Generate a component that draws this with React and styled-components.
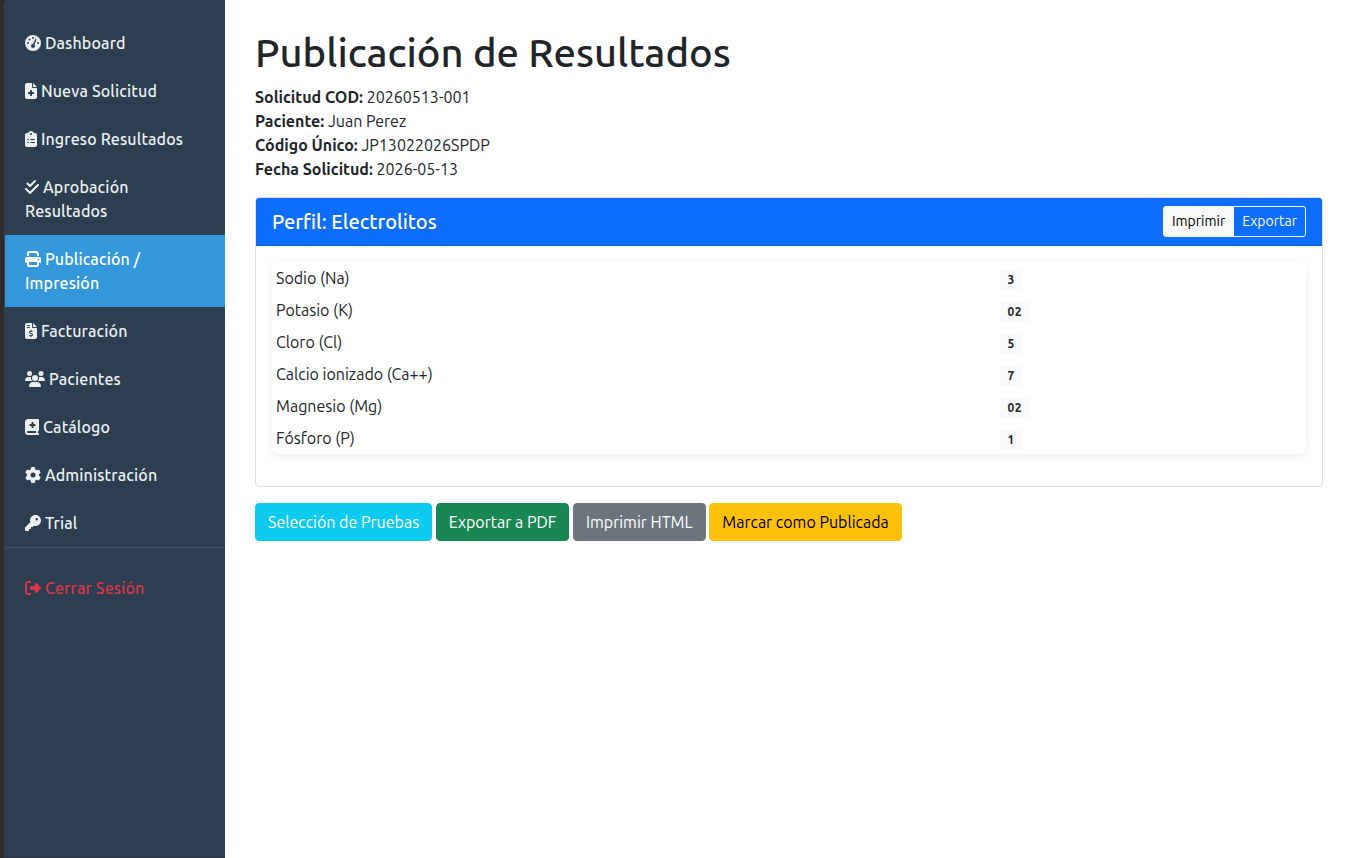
import React from "react";
import styled, { createGlobalStyle } from "styled-components";
import {
  FaGaugeHigh,
  FaFileMedical,
  FaClipboardList,
  FaCheckDouble,
  FaPrint,
  FaFileInvoiceDollar,
  FaUsers,
  FaBookMedical,
  FaGear,
  FaKey,
  FaRightFromBracket,
} from "react-icons/fa6";

const menu = [
  { icon: FaGaugeHigh, width: 16, label: "Dashboard" },
  { icon: FaFileMedical, width: 12, label: "Nueva Solicitud" },
  { icon: FaClipboardList, width: 12, label: "Ingreso Resultados" },
  { icon: FaCheckDouble, width: 14, label: "Aprobación Resultados" },
  { icon: FaPrint, width: 16, label: "Publicación / Impresión", active: true },
  { icon: FaFileInvoiceDollar, width: 12, label: "Facturación" },
  { icon: FaUsers, width: 20, label: "Pacientes" },
  { icon: FaBookMedical, width: 14, label: "Catálogo" },
  { icon: FaGear, width: 16, label: "Administración" },
  { icon: FaKey, width: 16, label: "Trial" },
];

const solicitud = [
  { label: "Solicitud COD:", value: "20260513-001" },
  { label: "Paciente:", value: "Juan Perez" },
  { label: "Código Único:", value: "JP13022026SPDP" },
  { label: "Fecha Solicitud:", value: "2026-05-13" },
];

const resultados = [
  { prueba: "Sodio (Na)", valor: "3" },
  { prueba: "Potasio (K)", valor: "02" },
  { prueba: "Cloro (Cl)", valor: "5" },
  { prueba: "Calcio ionizado (Ca++)", valor: "7" },
  { prueba: "Magnesio (Mg)", valor: "02" },
  { prueba: "Fósforo (P)", valor: "1" },
];

const App = () => {
  return (
    <>
      <GlobalStyle />
      <Layout>
        <Sidebar>
          <Menu>
            {menu.map(({ icon: Icon, width, label, active }) => (
              <MenuLink key={label} $active={active} $iconWidth={width}>
                <Icon /> {label}
              </MenuLink>
            ))}
          </Menu>
          <Logout>
            <FaRightFromBracket /> Cerrar Sesión
          </Logout>
        </Sidebar>
        <Content>
          <Title>Publicación de Resultados</Title>
          <Info>
            {solicitud.map(({ label, value }) => (
              <div key={label}>
                <strong>{label}</strong> {value}
              </div>
            ))}
          </Info>
          <Card>
            <CardHeader>
              <h5>Perfil: Electrolitos</h5>
              <ButtonGroup>
                <SmallButton $filled>Imprimir</SmallButton>
                <SmallButton>Exportar</SmallButton>
              </ButtonGroup>
            </CardHeader>
            <CardBody>
              <Results>
                {resultados.map(({ prueba, valor }) => (
                  <ResultRow key={prueba}>
                    <span>{prueba}</span>
                    <div>
                      <Badge>{valor}</Badge>
                    </div>
                  </ResultRow>
                ))}
              </Results>
            </CardBody>
          </Card>
          <Actions>
            <Button $bg="#0dcaf0">Selección de Pruebas</Button>
            <Button $bg="#198754">Exportar a PDF</Button>
            <Button $bg="#6c757d">Imprimir HTML</Button>
            <Button $bg="#ffc107" $color="#000">
              Marcar como Publicada
            </Button>
          </Actions>
        </Content>
      </Layout>
    </>
  );
};

export default App;

const GlobalStyle = createGlobalStyle`
  * {
    box-sizing: border-box;
  }
  body {
    margin: 0;
    background: #ffffff;
    color: #212529;
    font-family: Ubuntu, "Noto Sans", sans-serif;
    font-size: 16px;
    font-weight: 400;
    line-height: 1.5;
  }
`;

const Layout = styled.div`
  display: flex;
  height: 100vh;
  overflow: hidden;
  background: linear-gradient(to right, #2f2c30 8px, transparent 8px);
`;

const Sidebar = styled.aside`
  width: 221px;
  flex-shrink: 0;
  margin-left: 4px;
  padding-top: 19px;
  border-left: 1px solid #3b3f49;
  border-bottom: 1px solid #2e3645;
  border-top-left-radius: 5px;
  background: #2c3e50;
  font-weight: 500;
  letter-spacing: 0.15px;
  svg {
    width: 16px;
    height: 16px;
    vertical-align: -0.125em;
  }
`;

const Menu = styled.nav`
  border-bottom: 1px solid #415162;
`;

const MenuLink = styled.a`
  display: block;
  padding: 12px 20px;
  color: ${({ $active }) => ($active ? "#ffffff" : "#ecf0f1")};
  background: ${({ $active }) => ($active ? "#3498db" : "transparent")};
  svg {
    width: ${({ $iconWidth }) => $iconWidth}px;
  }
`;

const Logout = styled.a`
  display: block;
  margin-top: 16px;
  padding: 12px 20px;
  color: #dc3545;
`;

const Content = styled.main`
  flex: 1;
  padding: 29px 29px 0 30px;
`;

const Title = styled.h1`
  margin: 0 0 8px;
  font-size: 40px;
  font-weight: 500;
  line-height: 1.2;
`;

const Info = styled.div`
  margin-bottom: 16px;
  strong {
    font-weight: 700;
  }
`;

const Card = styled.section`
  margin-bottom: 16px;
  border: 1px solid #dedfe0;
  border-radius: 4px;
  overflow: hidden;
`;

const CardHeader = styled.header`
  display: flex;
  justify-content: space-between;
  align-items: center;
  padding: 8px 16px;
  border-bottom: 1px solid #0b5cd9;
  background: #0d6efd;
  color: #ffffff;
  h5 {
    margin: 0;
    font-size: 20px;
    font-weight: 500;
    line-height: 1.2;
  }
`;

const ButtonGroup = styled.div`
  display: flex;
`;

const SmallButton = styled.button`
  padding: 4px 8px;
  border: 1px solid #f8f9fa;
  border-radius: ${({ $filled }) => ($filled ? "3px 0 0 3px" : "0 3px 3px 0")};
  margin-left: ${({ $filled }) => ($filled ? "0" : "-1px")};
  background: ${({ $filled }) => ($filled ? "#f8f9fa" : "transparent")};
  color: ${({ $filled }) => ($filled ? "#000000" : "#f8f9fa")};
  font: inherit;
  font-size: 14px;
`;

const CardBody = styled.div`
  padding: 16px;
`;

const Results = styled.div`
  margin-bottom: 16px;
  border-radius: 6px;
  box-shadow: 0 2px 8px rgba(0, 0, 0, 0.08);
`;

const ResultRow = styled.div`
  display: grid;
  grid-template-columns: 70% 30%;
  height: 32px;
  padding: 4px 0;
  span {
    padding-left: 4px;
  }
  > div {
    padding-left: 4px;
  }
`;

const Badge = styled.b`
  display: inline-block;
  padding: 4.2px 7.8px;
  border-radius: 4px;
  background: #f8f9fa;
  font-size: 12px;
  font-weight: 700;
  line-height: 1;
  letter-spacing: 0.3px;
`;

const Actions = styled.div`
  display: flex;
  gap: 3.7px;
`;

const Button = styled.button`
  padding: 6px 12px;
  border: 1px solid ${({ $bg }) => $bg};
  border-radius: 4px;
  background: ${({ $bg }) => $bg};
  color: ${({ $color }) => $color || "#ffffff"};
  font: inherit;
`;
